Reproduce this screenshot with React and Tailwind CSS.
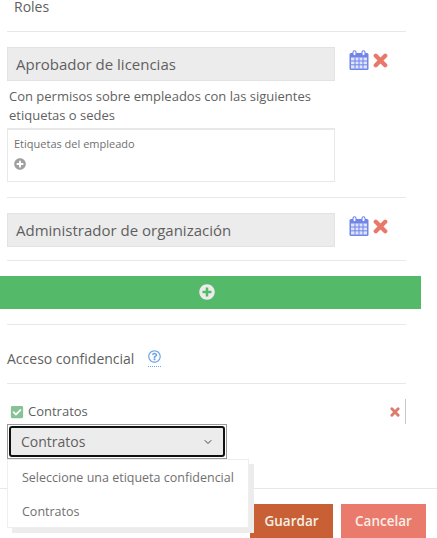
import { FaPlusCircle, FaCheckSquare, FaRegQuestionCircle } from 'react-icons/fa';
import { ChevronDown } from 'lucide-react';

function CalendarIcon() {
    return (
        <svg width="20" height="20" viewBox="0 0 20 20" className="shrink-0">
            <rect x="0.5" y="3" width="19" height="17" rx="1.5" fill="#7184e8" />
            <rect x="2" y="7.5" width="16" height="11" fill="#dfe4fb" />
            <path d="M6 7.5v11M10 7.5v11M14 7.5v11M2 11h16M2 14.8h16" stroke="#7184e8" strokeWidth="1" fill="none" />
            <rect x="4" y="0.8" width="3" height="5" rx="1.5" fill="#fff" stroke="#7184e8" strokeWidth="1.1" />
            <rect x="13" y="0.8" width="3" height="5" rx="1.5" fill="#fff" stroke="#7184e8" strokeWidth="1.1" />
        </svg>
    );
}

function CrossIcon({ size, color }) {
    return (
        <svg width={size} height={size} viewBox="0 0 14 14" className="shrink-0">
            <path d="M2.6 2.6l8.8 8.8M11.4 2.6l-8.8 8.8" stroke={color} strokeWidth="4" strokeLinecap="round" fill="none" />
        </svg>
    );
}

function RoleRow({ name }) {
    return (
        <div className="flex items-start">
            <div className="flex h-[34px] w-[328px] items-center border border-[#e3e3e3] bg-[#ececec] pl-2 text-[15px] text-[#5f5f5f]">
                {name}
            </div>
            <div className="ml-[14px] mt-[3px] flex items-center gap-[4px]">
                <CalendarIcon />
                <CrossIcon size={15} color="#e8796a" />
            </div>
        </div>
    );
}

export default function App() {
    return (
        <main className="relative h-[538px] w-[437px] overflow-hidden bg-white font-['Open_Sans',sans-serif] text-[#5f5f5f]">
            <div className="px-[7px]">
                <div className="h-[31px] w-[399px] pl-[7px] text-[14px] leading-[13px]">Roles</div>
                <div className="w-[399px] border-t border-[#e8e8e8] pt-[15px]">
                    <RoleRow name="Aprobador de licencias" />
                    <p className="mt-[6px] w-[328px] pl-[2px] text-[13px] leading-[19px]">
                        Con permisos sobre empleados con las siguientes etiquetas o sedes
                    </p>
                    <div className="mt-[3px] h-[54px] w-[328px] border border-t-2 border-[#e8e8e8] pl-[6px] pt-[6px]">
                        <p className="text-[11px] leading-[15px] text-[#707070]">Etiquetas del empleado</p>
                        <FaPlusCircle className="mt-[7px] text-[12px] text-[#a0a0a0]" />
                    </div>
                </div>
                <div className="mt-[15px] w-[399px] border-t border-[#e8e8e8] pt-[15px]">
                    <RoleRow name="Administrador de organización" />
                </div>
                <div className="mt-[13px] w-[399px] border-t border-[#e8e8e8]" />
            </div>

            <div className="mt-[15px] flex h-[33px] w-[421px] items-center justify-center bg-[#54b968] pb-[2px] pr-[8px]">
                <FaPlusCircle className="text-[16px] text-[#ececec]" />
            </div>

            <div className="px-[7px]">
                <div className="mt-[15px] w-[399px] border-t border-[#e8e8e8]" />
                <div className="flex h-[58px] w-[399px] items-center pt-[9px] text-[14px]">
                    <span>Acceso confidencial</span>
                    <span className="ml-[14px] border-b border-dotted border-[#6ea6e8] pb-[3px]">
                        <FaRegQuestionCircle className="text-[13px] text-[#6ea6e8]" />
                    </span>
                </div>
                <div className="w-[399px] border-t border-[#e8e8e8]" />
                <div className="mt-[15px] flex h-[25px] w-[399px] items-center justify-between">
                    <div className="flex items-center pl-[3px] pt-[1px] text-[13px]">
                        <FaCheckSquare className="mr-[4px] text-[14px] text-[#86c295]" />
                        Contratos
                    </div>
                    <div className="flex h-[25px] items-center border-r border-[#c8c8c8] pr-[5px]">
                        <CrossIcon size={10} color="#dc7a6e" />
                    </div>
                </div>
                <div className="h-[35px] w-[220px] border border-[#9a9a9a] p-[1px]">
                    <div className="flex h-full items-center justify-between rounded-[3px] border-2 border-[#111] bg-[#ececec] pl-[10px] pr-[9px] text-[14px]">
                        Contratos
                        <ChevronDown size={12} strokeWidth={2} className="text-[#444]" />
                    </div>
                </div>
            </div>

            <div className="absolute left-0 right-0 top-[488px] flex h-[50px] justify-end gap-2 border-t border-[#e8e8e8] pr-[11px] pt-[15px]">
                <button className="h-[34px] w-[83px] bg-[#c96035] text-[13.5px] font-semibold text-[#f5f0e8]">Guardar</button>
                <button className="h-[34px] w-[85px] bg-[#ea7a6b] text-[13.5px] font-semibold text-[#f9efe8]">Cancelar</button>
            </div>

            <div className="absolute left-[7px] top-[459px] h-[69px] w-[242px] border border-[#eee] bg-white text-[12.5px] leading-[18px] text-[#707070] shadow-[5px_5px_0_#ececec]">
                <p className="pl-[14px] pt-[9px]">Seleccione una etiqueta confidencial</p>
                <p className="pl-[14px] pt-[16px]">Contratos</p>
            </div>
        </main>
    );
}
